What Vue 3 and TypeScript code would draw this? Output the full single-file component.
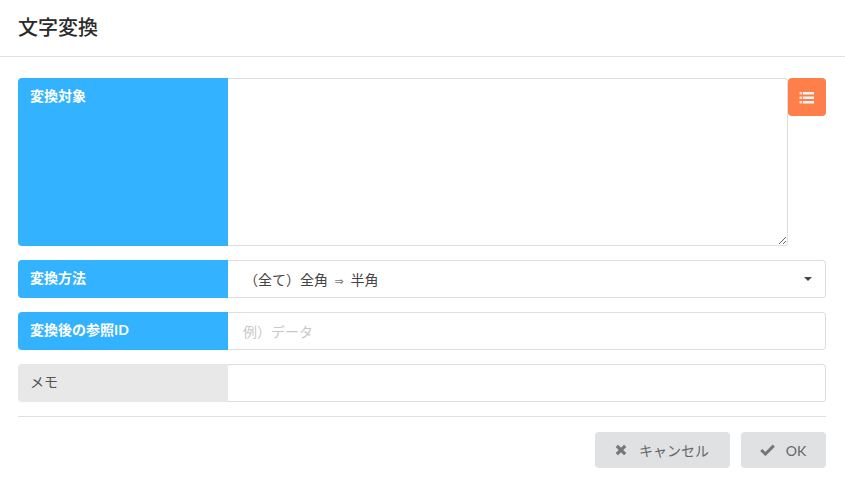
<script setup lang="ts">
const title = '文字変換'
</script>

<template>
  <div class="modal">
    <header class="head">{{ title }}</header>
    <div class="body">
      <div class="row">
        <div class="label blue">変換対象</div>
        <textarea class="area"></textarea>
        <button class="side" type="button" aria-label="list">
          <svg class="list" width="16" height="12" viewBox="0 0 16 12" fill="#fff">
            <rect x="0.5" y="0" width="2.4" height="2.5" opacity=".75" />
            <rect x="3.8" y="0" width="11.2" height="2.5" opacity=".92" />
            <rect x="0.5" y="4.5" width="2.4" height="2.5" opacity=".75" />
            <rect x="3.8" y="4.5" width="11.2" height="2.5" opacity=".92" />
            <rect x="0.5" y="9" width="2.4" height="2.5" opacity=".75" />
            <rect x="3.8" y="9" width="11.2" height="2.5" opacity=".92" />
          </svg>
        </button>
      </div>
      <div class="row">
        <div class="label blue">変換方法</div>
        <div class="select">
          <span>（全て）全角 <span class="arrow">⇒</span> 半角</span>
          <i class="caret"></i>
        </div>
      </div>
      <div class="row">
        <div class="label blue">変換後の参照ID</div>
        <input class="field" type="text" placeholder="例）データ" />
      </div>
      <div class="row">
        <div class="label grey">メモ</div>
        <input class="field" type="text" />
      </div>
      <footer class="actions">
        <button class="btn cancel" type="button">
          <svg width="12" height="12" viewBox="0 0 12 12" fill="none" stroke="#767676" stroke-width="3.2">
            <path d="M1.8 1.8 10.2 10.2M10.2 1.8 1.8 10.2" />
          </svg>
          <span>キャンセル</span>
        </button>
        <button class="btn ok" type="button">
          <svg width="15" height="12" viewBox="0 0 15 12" fill="none" stroke="#767676" stroke-width="3">
            <path d="M1.2 6 5.4 10 13.8 1.6" />
          </svg>
          <span>OK</span>
        </button>
      </footer>
    </div>
  </div>
</template>

<style>
html, body { margin: 0; background: #fff; }
</style>

<style scoped>
.modal {
  width: 845px;
  height: 486px;
  box-sizing: border-box;
  background: #fff;
  font-family: Lato, "Noto Sans CJK JP", sans-serif;
  font-size: 14px;
  color: rgba(0, 0, 0, .87);
  overflow: hidden;
}
.head {
  height: 56px;
  box-sizing: content-box;
  padding-left: 18px;
  border-bottom: 1px solid #e0e0e0;
  font-size: 20px;
  font-weight: 500;
  line-height: 54px;
  color: #2b2b2b;
}
.body {
  padding: 21px 19px 0 18px;
  display: flex;
  flex-direction: column;
  gap: 14px;
}
.row {
  display: flex;
  height: 38px;
}
.row:first-child {
  height: 168px;
}
.label {
  width: 210px;
  flex: none;
  box-sizing: border-box;
  padding: 0 12px;
  line-height: 36px;
  font-weight: 700;
  border-radius: 4px 0 0 4px;
}
.blue { background: #33b2ff; color: #fff; }
.grey { background: #e8e8e8; color: #555; font-weight: 400; line-height: 35px; }
.area {
  width: 560px;
  height: 168px;
  flex: none;
  box-sizing: border-box;
  margin: 0;
  padding: 10px 14px;
  border: 1px solid #dedede;
  border-left: 0;
  border-radius: 0 4px 4px 0;
  outline: none;
  background: #fff;
  font: inherit;
}
.side {
  width: 38px;
  height: 38px;
  flex: none;
  padding: 0;
  border: 0;
  border-radius: 4px;
  background: #ff7f4a;
  display: flex;
  align-items: center;
  justify-content: center;
}
.list { margin-top: 2px; }
.select, .field {
  flex: 1;
  min-width: 0;
  box-sizing: border-box;
  height: 38px;
  margin: 0;
  border: 1px solid #dedede;
  border-left: 0;
  border-radius: 0 4px 4px 0;
  background: #fff;
  font: inherit;
  outline: none;
  padding: 0 15px;
}
.select {
  display: flex;
  align-items: center;
  justify-content: space-between;
  color: #444;
  padding-left: 16px;
}
.arrow {
  font-family: "DejaVu Sans", sans-serif;
  font-size: 11px;
  color: #777;
  padding: 0 3px;
}
.field::placeholder { color: #c8c8c8; opacity: 1; }
.caret {
  width: 0;
  height: 0;
  margin-right: -2px;
  border-left: 4px solid transparent;
  border-right: 4px solid transparent;
  border-top: 4px solid #444;
}
.actions {
  margin-top: 0;
  padding-top: 15px;
  border-top: 1px solid #e0e0e0;
  display: flex;
  justify-content: flex-end;
  gap: 11px;
}
.btn {
  height: 36px;
  padding: 0 1px 0 0;
  border: 0;
  border-radius: 4px;
  background: #e0e1e2;
  color: #666;
  font: inherit;
  font-size: 14px;
  display: flex;
  align-items: center;
  justify-content: center;
  gap: 12px;
}
.cancel { width: 135px; }
.ok { width: 85px; gap: 11px; }
</style>
